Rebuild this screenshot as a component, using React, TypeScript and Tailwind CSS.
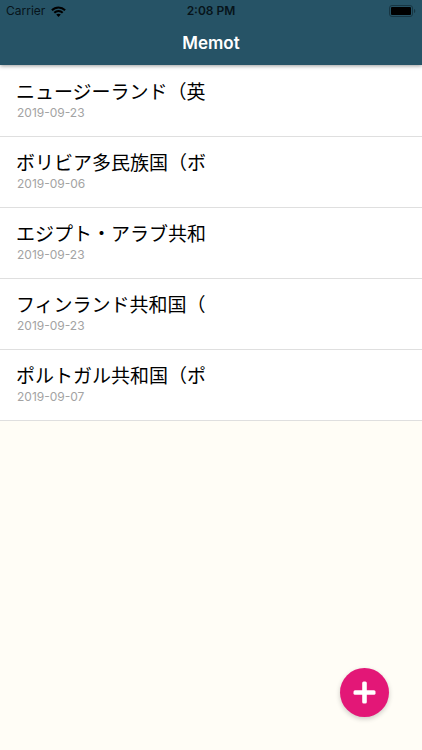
import React from "react";

type Memo = { title: string; date: string };

const memos: Memo[] = [
  { title: "ニュージーランド（英", date: "2019-09-23" },
  { title: "ボリビア多民族国（ボ", date: "2019-09-06" },
  { title: "エジプト・アラブ共和", date: "2019-09-23" },
  { title: "フィンランド共和国（", date: "2019-09-23" },
  { title: "ポルトガル共和国（ポ", date: "2019-09-07" },
];

function WifiIcon() {
  return (
    <svg width="15" height="11" viewBox="0 0 15 11" fill="none" stroke="#000" strokeWidth="2" aria-hidden="true">
      <path d="M0.9 4.3C4.6 0.5 10.4 0.5 14.1 4.3" />
      <path d="M3.3 6.8C5.7 4.4 9.3 4.4 11.7 6.8" />
      <path d="M5.2 8.6C6.5 7.3 8.5 7.3 9.8 8.6L7.5 10.9Z" fill="#000" stroke="none" />
    </svg>
  );
}

function BatteryIcon() {
  return (
    <svg width="27" height="12" viewBox="0 0 27 12" aria-hidden="true">
      <rect x="0.5" y="0.5" width="23" height="11" rx="2.5" fill="none" stroke="#173643" />
      <rect x="2" y="2" width="20" height="8" rx="1" fill="#000" />
      <path d="M25 4C26.7 4.4 26.7 7.6 25 8Z" fill="#173643" />
    </svg>
  );
}

function StatusBar() {
  return (
    <div className="grid h-5 grid-cols-3 items-center px-1.5 pt-0.5 text-xs text-[#07141a]">
      <div className="flex items-center gap-1.5">
        <span>Carrier</span>
        <WifiIcon />
      </div>
      <span className="text-center font-semibold">2:08 PM</span>
      <div className="flex justify-end">
        <BatteryIcon />
      </div>
    </div>
  );
}

export default function App() {
  return (
    <div className="min-h-screen bg-[#fffdf6] font-[Inter,'Noto_Sans_CJK_JP',sans-serif]">
      <header className="relative bg-[#265366] shadow-[0_1px_4px_rgba(0,0,0,0.4)]">
        <StatusBar />
        <h1 className="flex h-[45px] items-center justify-center pt-0.5 text-[17px] font-semibold text-white">Memot</h1>
      </header>
      <ul className="bg-white pt-px">
        {memos.map((memo) => (
          <li key={memo.title} className="border-b border-[#dfdfdf] px-4 py-[15px]">
            <p className="text-[19px] leading-6 text-black">{memo.title}</p>
            <p className="pl-px text-xs text-[#a3a3a3]">{memo.date}</p>
          </li>
        ))}
      </ul>
      <button
        type="button"
        aria-label="Add memo"
        className="fixed right-[33px] bottom-[33px] flex size-[49px] items-center justify-center rounded-full bg-[#e31777] shadow-[0_2px_5px_rgba(0,0,0,0.2)]"
      >
        <svg width="23" height="23" viewBox="0 0 23 23" fill="#fff" aria-hidden="true">
          <rect x="9.2" y="0.5" width="4.6" height="22" rx="1.5" />
          <rect x="0.5" y="9.2" width="22" height="4.6" rx="1.5" />
        </svg>
      </button>
    </div>
  );
}
